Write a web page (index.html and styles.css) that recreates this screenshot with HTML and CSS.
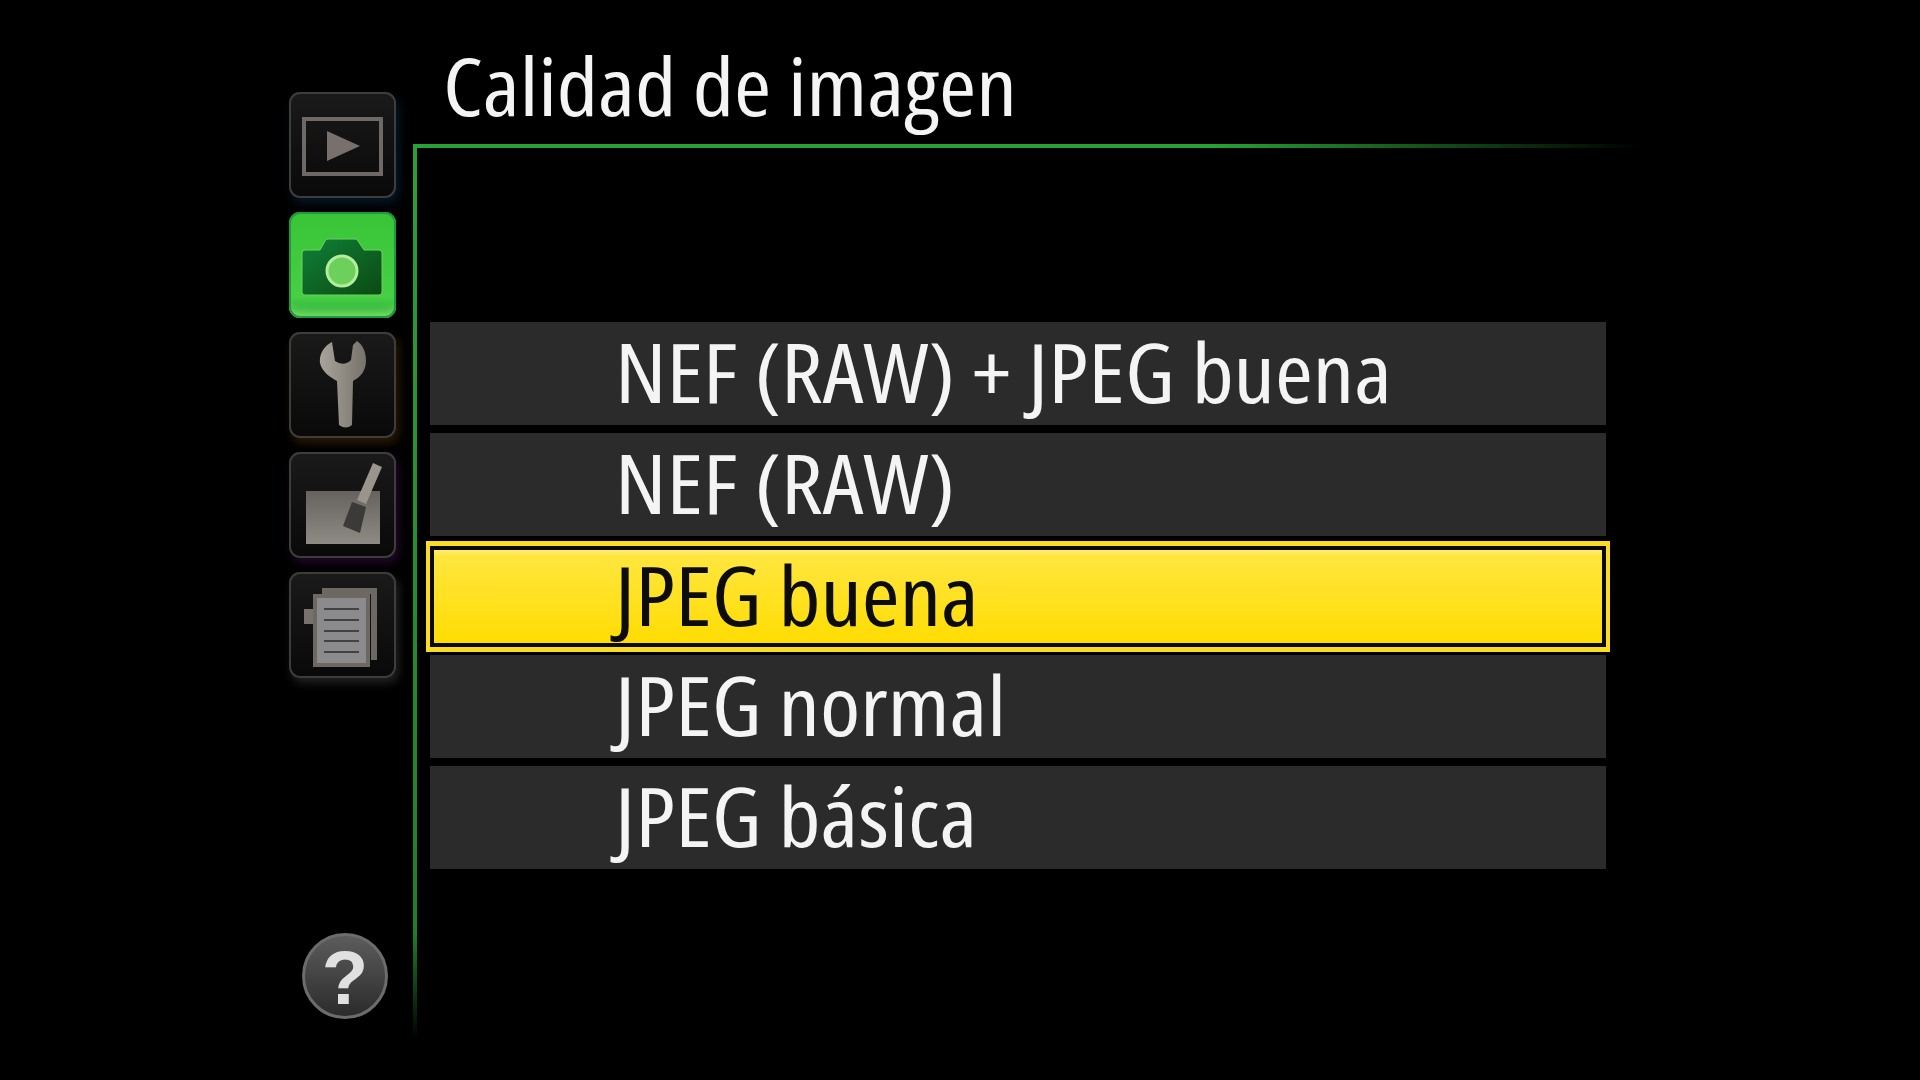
FILE: index.html
```html
<!DOCTYPE html>
<html lang="es">
<head>
    <meta charset="UTF-8">
    <title>Calidad de imagen</title>
    <link rel="stylesheet" href="styles.css">
</head>
<body>
    <div class="screen">
        <div class="sidebar">
            <div class="tab tab-play">
                <svg viewBox="0 0 107 106" width="107" height="106">
                    <rect x="15" y="27" width="77" height="55" fill="none" stroke="#6f6966" stroke-width="4"/>
                    <path d="M38 39 L71 54 L38 69 Z" fill="#77706c"/>
                </svg>
            </div>
            <div class="tab tab-active">
                <svg viewBox="0 0 107 106" width="107" height="106">
                    <defs>
                        <linearGradient id="camBody" x1="0" y1="0" x2="1" y2="1">
                            <stop offset="0" stop-color="#0f8038"/>
                            <stop offset="1" stop-color="#0b4a12"/>
                        </linearGradient>
                    </defs>
                    <path d="M13 41 Q13 38 16 38 L31 38 L36 29 Q37 27 39 27 L66 27 Q68 27 69 29 L75 38 L90 38 Q93 38 93 41 L93 80 Q93 83 90 83 L16 83 Q13 83 13 80 Z" fill="url(#camBody)" stroke="#6fd05f" stroke-width="1"/>
                    <circle cx="53" cy="59" r="15" fill="#6bd05c" stroke="#b4ec9c" stroke-width="3"/>
                </svg>
            </div>
            <div class="tab tab-setup">
                <svg viewBox="0 0 107 106" width="107" height="106">
                    <defs>
                        <linearGradient id="metal" x1="0" y1="0" x2="1" y2="0">
                            <stop offset="0" stop-color="#a9a49b"/>
                            <stop offset="1" stop-color="#77726a"/>
                        </linearGradient>
                    </defs>
                    <path d="M43 10 C35 14 30 22 31 31 C33 40 41 45 48 49 L50 93 Q57 98 63 93 L64 49 C72 45 77 38 77 29 C77 20 74 13 68 9 L64 13 L62 28 Q55 35 46 29 Z" fill="url(#metal)"/>
                </svg>
            </div>
            <div class="tab tab-retouch">
                <svg viewBox="0 0 107 106" width="107" height="106">
                    <defs>
                        <linearGradient id="sheet" x1="0" y1="0" x2="0" y2="1">
                            <stop offset="0" stop-color="#66625d"/>
                            <stop offset="1" stop-color="#8e8a84"/>
                        </linearGradient>
                    </defs>
                    <rect x="17" y="39" width="74" height="53" fill="url(#sheet)"/>
                    <path d="M84 11 L93 15 L77 52 L68 48 Z" fill="#9a958c"/>
                    <path d="M63 50 L77 55 L71 81 L54 74 Z" fill="#3b3a39"/>
                </svg>
            </div>
            <div class="tab tab-menu">
                <svg viewBox="0 0 107 106" width="107" height="106">
                    <path d="M33 16 L88 16 L88 88 L82 88 L82 22 L33 22 Z" fill="#6e6862"/>
                    <rect x="15" y="37" width="12" height="15" fill="#77726c"/>
                    <rect x="26" y="24" width="53" height="69" fill="#8b8b8d" stroke="#6e6862" stroke-width="4"/>
                    <path d="M35 37 H70 M35 48 H70 M35 59 H70 M35 69 H70 M35 80 H70" stroke="#44423f" stroke-width="2"/>
                </svg>
            </div>
            <div class="help">?</div>
        </div>
        <div class="content">
            <h1 class="title"><span class="title-text">Calidad de imagen</span></h1>
            <div class="panel">
                <div class="row"><span class="row-text">NEF (RAW) + JPEG buena</span></div>
                <div class="row"><span class="row-text">NEF (RAW)</span></div>
                <div class="row selected"><span class="row-text">JPEG buena</span></div>
                <div class="row"><span class="row-text">JPEG normal</span></div>
                <div class="row"><span class="row-text">JPEG básica</span></div>
            </div>
        </div>
    </div>
</body>
</html>
```

FILE: styles.css
```css
html, body {
    margin: 0;
    height: 100%;
    background: #000;
    overflow: hidden;
}
.screen {
    display: flex;
    height: 1080px;
    padding-left: 289px;
    box-sizing: border-box;
    font-family: "Open Sans", "Noto Sans", sans-serif;
    font-stretch: 75%;
    color: #f4f4f4;
}
.sidebar {
    display: flex;
    flex-direction: column;
    align-items: flex-start;
    gap: 14px;
    width: 107px;
    padding-top: 92px;
    margin-right: 17px;
}
.tab {
    width: 107px;
    height: 106px;
    border-radius: 11px;
    background: linear-gradient(#1a1a1a, #090909);
    box-shadow: inset 0 0 0 2px #3f3d3c;
    display: flex;
}
.tab svg {
    filter: blur(0.6px);
}
.tab-play { box-shadow: inset 0 0 0 2px #3f3d3c, 3px 5px 10px #06182a; }
.tab-setup { box-shadow: inset 0 0 0 2px #3f3d3c, 3px 5px 10px #2a1a04; }
.tab-retouch { box-shadow: inset 0 0 0 2px #3f3d3c, 3px 5px 10px #220828; }
.tab-menu { box-shadow: inset 0 0 0 2px #3f3d3c, 3px 5px 10px #222; }
.tab-active {
    background: linear-gradient(#39c437, #47cf45 80%, #2aa838);
    box-shadow: inset 0 0 0 2px #1f9a3a, inset 0 -14px 8px -8px #7ee06a;
}
.help {
    width: 86px;
    height: 86px;
    box-sizing: border-box;
    margin: auto 0 61px 13px;
    border: 3px solid #6c6c6c;
    border-radius: 50%;
    background: linear-gradient(#5c5c5c, #2b2b2b);
    color: #e0e0e0;
    font: bold 76px/84px "Liberation Sans", sans-serif;
    text-align: center;
}
.content {
    display: flex;
    flex-direction: column;
}
.title {
    margin: 0;
    height: 144px;
    padding-left: 30px;
    font-size: 80px;
    font-weight: 400;
    line-height: 170px;
    white-space: nowrap;
    box-sizing: border-box;
}
.title-text {
    display: inline-block;
    transform: scaleX(1.125);
    transform-origin: left center;
}
.panel {
    width: 1227px;
    height: 896px;
    box-sizing: border-box;
    padding: 178px 0 0 17px;
    display: flex;
    flex-direction: column;
    gap: 8px;
    background-image:
        linear-gradient(90deg, #27a333, #27a333 65%, #000),
        linear-gradient(#27a333, #1c8026 88%, #000);
    background-size: 100% 4px, 4px 100%;
    background-repeat: no-repeat;
}
.row {
    width: 1176px;
    height: 103px;
    box-sizing: border-box;
    padding: 0 0 5px 185px;
    background: #2b2b2b;
    font-size: 82px;
    display: flex;
    align-items: center;
}
.row-text {
    display: inline-block;
    transform: scaleX(1.118);
    transform-origin: left center;
    white-space: nowrap;
}
.row.selected {
    width: 1184px;
    height: 111px;
    margin: -3px -4px -5px;
    padding: 0 0 5px 185px;
    border-style: solid;
    border-color: #fbdc23;
    border-width: 5px 4px;
    background: linear-gradient(#fff09a, #ffe63e 10%, #ffdc00);
    box-shadow: inset 0 0 0 4px #0a0a0a;
    color: #0c0c0c;
}
```
